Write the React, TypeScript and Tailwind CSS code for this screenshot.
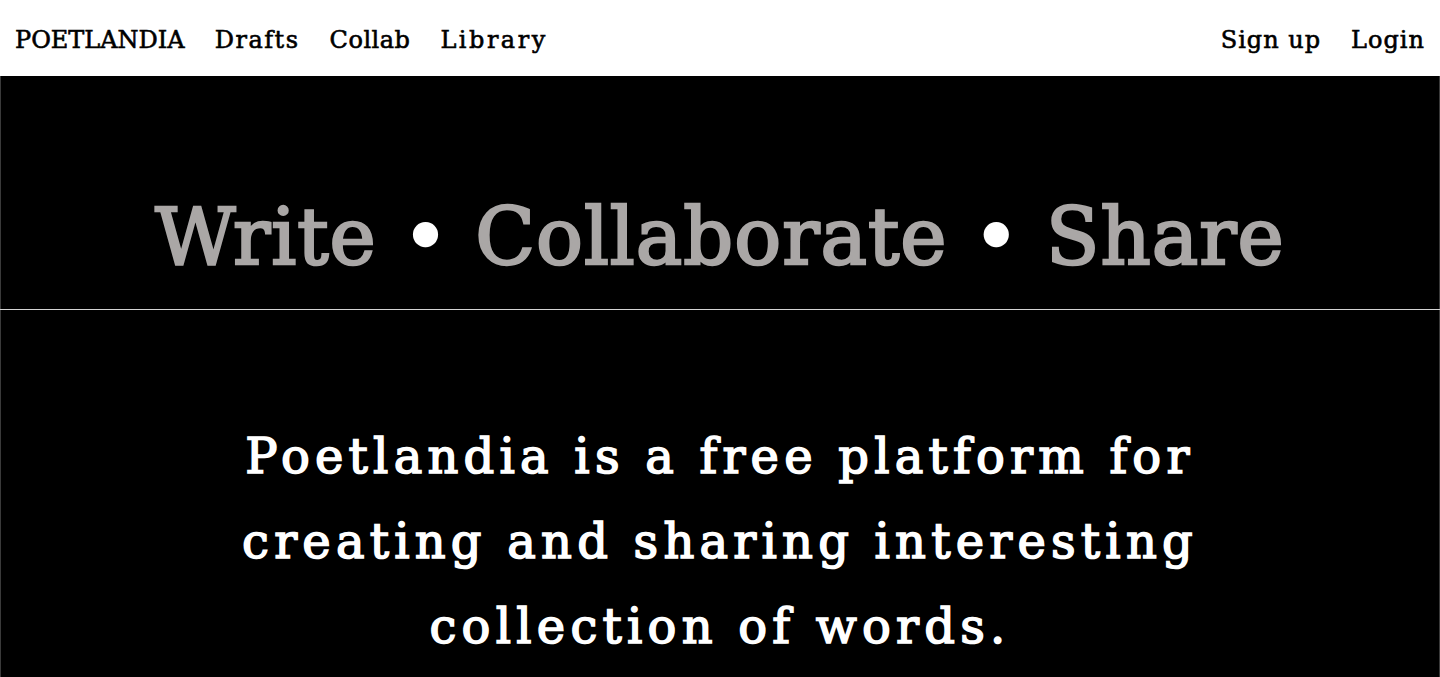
import React from "react";

const serif = { fontFamily: '"DejaVu Serif", "Liberation Serif", serif' };

export default function App() {
  return (
    <div className="min-h-[677px] w-full bg-black" style={serif}>
      <header className="flex h-[76px] items-center justify-between bg-white px-[15px] pt-[4px] text-[24px] text-black [-webkit-text-stroke:0.6px_currentColor]">
        <nav className="flex items-center gap-[30px]">
          <span>POETLANDIA</span>
          <span className="tracking-[1.5px]">Drafts</span>
          <span className="tracking-[0.5px]">Collab</span>
          <span className="tracking-[2.5px]">Library</span>
        </nav>
        <nav className="flex items-center gap-[30px]">
          <span className="tracking-[1px]">Sign up</span>
          <span className="tracking-[1px]">Login</span>
        </nav>
      </header>
      <section className="h-[233px] border-x border-[#3a3a3a] bg-black pt-[122px] text-center">
        <h1 className="text-[78px] leading-none tracking-[1px] text-[#aaa7a6] [-webkit-text-stroke:2.5px_currentColor]">
          Write <span className="text-white">•</span> Collaborate <span className="text-white">•</span> Share
        </h1>
      </section>
      <div className="h-px bg-[#d4d4d4]" />
      <section className="border-x border-[#3a3a3a] bg-black pt-[104px] pb-[40px]">
        <p className="mx-auto max-w-[1000px] text-center text-[48px] leading-[85px] tracking-[5.2px] text-white [-webkit-text-stroke:1.6px_currentColor]">
          Poetlandia is a free platform for creating and sharing interesting collection of words.
        </p>
      </section>
    </div>
  );
}
